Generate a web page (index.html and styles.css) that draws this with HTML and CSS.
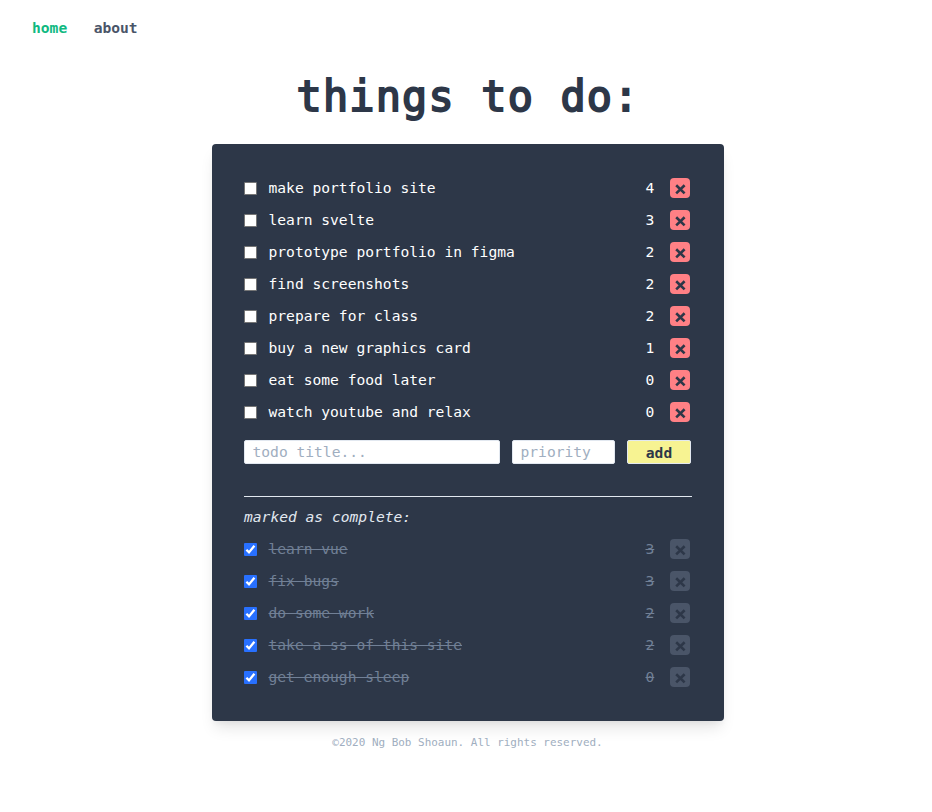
FILE: index.html
```
<!DOCTYPE html>
<html lang="en">
<head>
<meta charset="utf-8">
<title>things to do</title>
<link rel="stylesheet" href="styles.css">
</head>
<body>
<svg class="defs" width="0" height="0">
  <symbol id="cross" viewBox="0 0 20 20"><path d="M6.2 7.2l8.4 8.2M14.6 7.2l-8.4 8.2" fill="none" stroke="#2d3748" stroke-width="2.6"/></symbol>
  <symbol id="check" viewBox="0 0 13 13"><path d="M2.4 6.8l2.6 2.6 5.4-6.6" fill="none" stroke="#fff" stroke-width="2.3"/></symbol>
</svg>
<nav class="nav"><a class="active">home</a><a>about</a></nav>
<main>
  <h1>things to do:</h1>
  <section class="card">
    <ul class="list">
      <li><span class="box"></span><span class="name">make portfolio site</span><span class="num">4</span><button class="del"><svg><use href="#cross"/></svg></button></li>
      <li><span class="box"></span><span class="name">learn svelte</span><span class="num">3</span><button class="del"><svg><use href="#cross"/></svg></button></li>
      <li><span class="box"></span><span class="name">prototype portfolio in figma</span><span class="num">2</span><button class="del"><svg><use href="#cross"/></svg></button></li>
      <li><span class="box"></span><span class="name">find screenshots</span><span class="num">2</span><button class="del"><svg><use href="#cross"/></svg></button></li>
      <li><span class="box"></span><span class="name">prepare for class</span><span class="num">2</span><button class="del"><svg><use href="#cross"/></svg></button></li>
      <li><span class="box"></span><span class="name">buy a new graphics card</span><span class="num">1</span><button class="del"><svg><use href="#cross"/></svg></button></li>
      <li><span class="box"></span><span class="name">eat some food later</span><span class="num">0</span><button class="del"><svg><use href="#cross"/></svg></button></li>
      <li><span class="box"></span><span class="name">watch youtube and relax</span><span class="num">0</span><button class="del"><svg><use href="#cross"/></svg></button></li>
    </ul>
    <form class="form">
      <input class="field title" placeholder="todo title...">
      <input class="field priority" placeholder="priority">
      <button class="add" type="button">add</button>
    </form>
    <p class="label">marked as complete:</p>
    <ul class="list done">
      <li><span class="box"><svg><use href="#check"/></svg></span><span class="name">learn vue</span><span class="num">3</span><button class="del"><svg><use href="#cross"/></svg></button></li>
      <li><span class="box"><svg><use href="#check"/></svg></span><span class="name">fix bugs</span><span class="num">3</span><button class="del"><svg><use href="#cross"/></svg></button></li>
      <li><span class="box"><svg><use href="#check"/></svg></span><span class="name">do some work</span><span class="num">2</span><button class="del"><svg><use href="#cross"/></svg></button></li>
      <li><span class="box"><svg><use href="#check"/></svg></span><span class="name">take a ss of this site</span><span class="num">2</span><button class="del"><svg><use href="#cross"/></svg></button></li>
      <li><span class="box"><svg><use href="#check"/></svg></span><span class="name">get enough sleep</span><span class="num">0</span><button class="del"><svg><use href="#cross"/></svg></button></li>
    </ul>
  </section>
</main>
<footer>©2020 Ng Bob Shoaun. All rights reserved.</footer>
</body>
</html>
```
FILE: styles.css
```
* { box-sizing: border-box; margin: 0; padding: 0; }
body {
  background: #fff;
  color: #2d3748;
  font: 14.61px/24px "DejaVu Sans Mono", "Liberation Mono", monospace;
}
button, input { font: inherit; border: 0; }
.defs { display: block; }
.nav { display: flex; gap: 26.5px; padding: 16px 32px 0; font-weight: bold; color: #4a5568; }
.nav .active { color: #10b981; }
main { width: 512px; margin: 20px 208px 0 212px; }
h1 {
  height: 84px;
  padding-left: 84.5px;
  font-size: 41.8px;
  letter-spacing: 1.23px;
  line-height: 73px;
  font-weight: normal;
  white-space: nowrap;
  -webkit-text-stroke: 1.9px #2d3748;
}
.card {
  height: 577px;
  padding: 32px;
  border-radius: 4px;
  background: #2d3748;
  color: #fff;
  box-shadow: 0 10px 15px -3px rgba(0, 0, 0, .1), 0 4px 6px -2px rgba(0, 0, 0, .05);
}
.list { display: grid; gap: 8px; list-style: none; }
.list li { display: flex; align-items: center; height: 24px; padding-right: 2px; }
.box { width: 13px; height: 13px; margin: 1px 11.5px 0 0; background: #fff; border: 1px solid #767676; border-radius: 1px; }
.box svg { display: block; width: 13px; height: 13px; }
.name { flex: 1; white-space: pre; }
.num { width: 9px; margin-right: 15.5px; }
.del { width: 20px; height: 20px; border-radius: 4px; background: #ff8085; }
.del svg { display: block; width: 20px; height: 20px; }
.form { display: flex; gap: 12px; height: 24px; margin-top: 16px; }
.field { height: 24px; padding: 0 7.5px; border: 1px solid #e2e8f0; border-radius: 2px; background: #fff; }
.field::placeholder { color: #a0aec0; opacity: 1; }
.title { width: 256px; }
.priority { width: 103px; }
.add { width: 64px; height: 24px; border: 1px solid #e2e8f0; border-radius: 2px; background: #f7f392; color: #2d3748; font-weight: bold; }
.label { margin: 32px 0 8px; padding-top: 8px; border-top: 1px solid #e2e8f0; color: #e2e8f0; font-style: italic; }
.done { color: #718096; }
.done .name, .done .num { text-decoration: line-through; }
.done .name { flex: 0 1 auto; margin-right: auto; }
.done .box { border: 0; background: #2870ff; }
.done .del { background: #4a5568; }
footer { margin: 10px 0 0 3px; text-align: center; color: #a0aec0; font-size: 10.96px; }
```
